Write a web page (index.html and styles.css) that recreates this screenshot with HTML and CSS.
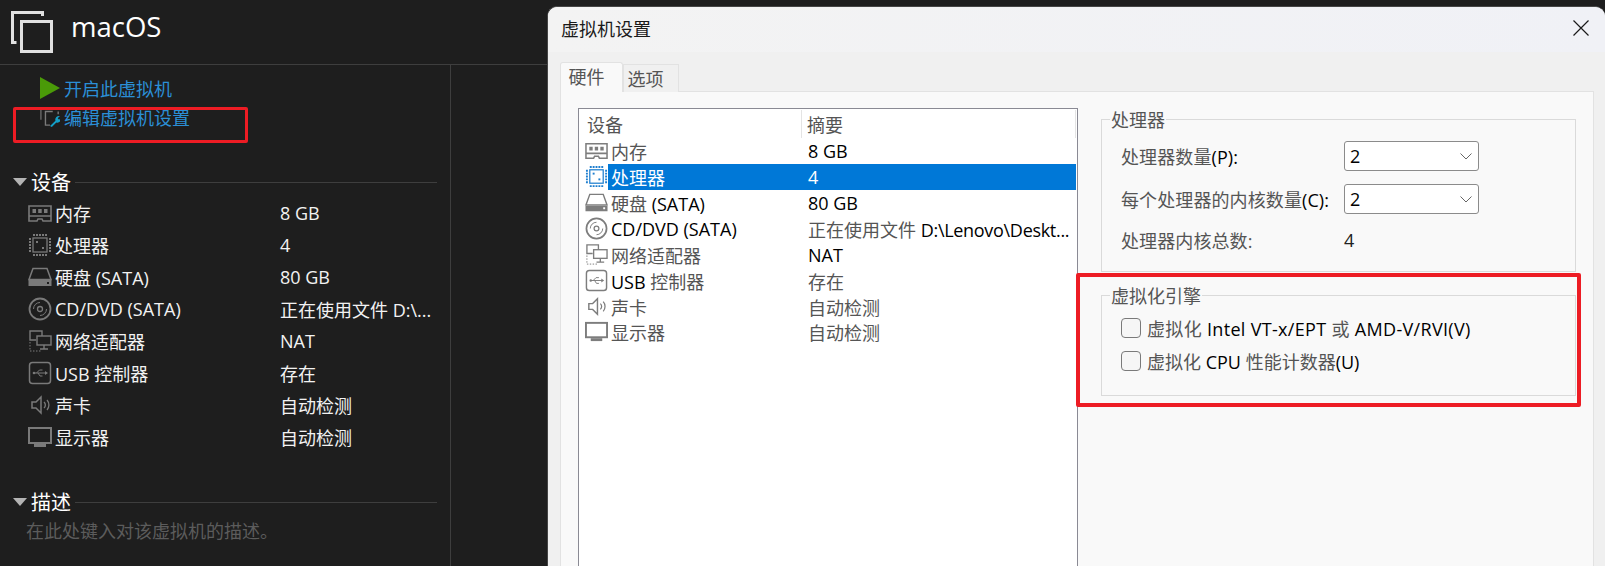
FILE: index.html
```html
<!DOCTYPE html>
<html lang="zh-CN">
<head>
<meta charset="utf-8">
<title>macOS - 虚拟机设置</title>
<link rel="stylesheet" href="styles.css">
</head>
<body>
<svg class="defs" aria-hidden="true">
  <symbol id="i-ram" viewBox="0 0 24 24"><path d="M1 5h22v10H1zM1 15v5h8l1-2h4l1 2h8v-5" fill="none" stroke="currentColor" stroke-width="1.6"/><path d="M4.500 8h3.500v4H4.500zM10.200 8h3.500v4h-3.500zM16 8h3.500v4H16z" fill="currentColor"/></symbol>
  <symbol id="i-cpu" viewBox="0 0 24 24"><rect x="5" y="5" width="14" height="14" fill="none" stroke="currentColor" stroke-width="1.300"/><path d="M5 2h14M5 22h14M2 5v14M22 5v14" fill="none" stroke="currentColor" stroke-width="2" stroke-dasharray="2 1"/><rect x="8" y="8" width="2" height="2" fill="currentColor"/><rect x="14" y="14" width="2" height="2" fill="currentColor"/></symbol>
  <symbol id="i-disk" viewBox="0 0 24 24"><path d="M5 3.500h14l4 11H1z" fill="none" stroke="currentColor" stroke-width="1.500"/><path d="M.5 15h23v6H.5z" fill="currentColor"/><rect x="19" y="17" width="2" height="2" fill="var(--hole)"/></symbol>
  <symbol id="i-cd" viewBox="0 0 24 24"><circle cx="12" cy="12" r="10.500" fill="none" stroke="currentColor" stroke-width="1.800"/><circle cx="12" cy="12" r="2.500" fill="none" stroke="currentColor" stroke-width="1.300"/><path d="M5.500 12A6.500 6.500 0 0 1 12 5.500M18.500 12A6.500 6.500 0 0 1 12 18.500" fill="none" stroke="currentColor"/></symbol>
  <symbol id="i-net" viewBox="0 0 24 24"><path d="M8 11H2V2h12v5" fill="none" stroke="currentColor" stroke-width="1.400"/><rect x="9" y="7" width="14" height="9" fill="none" stroke="currentColor" stroke-width="1.400"/><path d="M16 16v4M12 20h8" stroke="currentColor" stroke-width="1.400"/><path d="M2 13v9h12" fill="none" stroke="currentColor" stroke-dasharray="1.500 1.500"/></symbol>
  <symbol id="i-usb" viewBox="0 0 24 24"><rect x="1.500" y="1.500" width="21" height="21" rx="3" fill="none" stroke="currentColor" stroke-width="1.500"/><path d="M6 12h12M8.500 12l3-3h3M10 12l2 3h2.500" fill="none" stroke="currentColor"/><circle cx="6" cy="12" r="1.300" fill="currentColor"/><path d="M17 10l3 2-3 2z" fill="currentColor"/></symbol>
  <symbol id="i-snd" viewBox="0 0 24 24"><path d="M4 9h4l5-5v16l-5-5H4z" fill="none" stroke="currentColor" stroke-width="1.500"/><path d="M16 9a4 4 0 0 1 0 6M19 7a7.500 7.500 0 0 1 0 10" fill="none" stroke="currentColor" stroke-width="1.300"/></symbol>
  <symbol id="i-mon" viewBox="0 0 24 24"><rect x="1" y="3" width="22" height="15" fill="none" stroke="currentColor" stroke-width="2"/><path d="M6 20.500h12" stroke="currentColor" stroke-width="3"/></symbol>
</svg>

<div class="library">
  <header class="vm-head">
    <svg class="vm-icon" viewBox="0 0 44 44" aria-hidden="true"><path d="M31.500 5V1.500H1.500v30h4" fill="none" stroke="currentColor" stroke-width="3"/><rect x="10.500" y="10.500" width="30" height="30" fill="none" stroke="currentColor" stroke-width="3"/></svg>
    <h1 class="vm-name">macOS</h1>
  </header>
  <div class="vm-body">
    <div class="sidebar">
      <a class="action">
        <svg class="action-icon" viewBox="0 0 20 22" aria-hidden="true"><path d="M0 0l20 11L0 22z" fill="#4a9a08"/></svg>
        <span>开启此虚拟机</span>
      </a>
      <a class="action action-edit">
        <svg class="action-icon" viewBox="0 0 22 22" aria-hidden="true"><path d="M1 14V1h14" fill="none" stroke="#6a6a6a" stroke-width="1.500"/><path d="M14 5H6v15h5M20 5v3" fill="none" stroke="#7a7a7a" stroke-width="1.500"/><path d="M11 21l6-6a4 4 0 0 1 5-5l-2.500 2.500 1.500 1.500 2-2a4 4 0 0 1-5 5l-5 5z" fill="#14a0c8"/></svg>
        <span>编辑虚拟机设置</span>
      </a>

      <div class="sec-head"><i class="tri"></i><h2>设备</h2><i class="rule"></i></div>
      <ul class="dev-list">
        <li><svg class="ic"><use href="#i-ram"/></svg><span>内存</span><span>8 GB</span></li>
        <li><svg class="ic"><use href="#i-cpu"/></svg><span>处理器</span><span>4</span></li>
        <li><svg class="ic"><use href="#i-disk"/></svg><span>硬盘 (SATA)</span><span>80 GB</span></li>
        <li><svg class="ic"><use href="#i-cd"/></svg><span>CD/DVD (SATA)</span><span>正在使用文件 D:\...</span></li>
        <li><svg class="ic"><use href="#i-net"/></svg><span>网络适配器</span><span>NAT</span></li>
        <li><svg class="ic"><use href="#i-usb"/></svg><span>USB 控制器</span><span>存在</span></li>
        <li><svg class="ic"><use href="#i-snd"/></svg><span>声卡</span><span>自动检测</span></li>
        <li><svg class="ic"><use href="#i-mon"/></svg><span>显示器</span><span>自动检测</span></li>
      </ul>

      <div class="sec-head sec-desc"><i class="tri"></i><h2>描述</h2><i class="rule"></i></div>
      <p class="desc">在此处键入对该虚拟机的描述。</p>
    </div>
  </div>
</div>

<section class="dialog">
  <div class="titlebar">
    <span>虚拟机设置</span>
    <svg class="close" viewBox="0 0 16 16" aria-hidden="true"><path d="M.5.500l15 15M15.500.500l-15 15" stroke="#1a1a1a" stroke-width="1.200"/></svg>
  </div>
  <div class="dlg-body">
    <div class="tabs">
      <div class="tab tab-on">硬件</div>
      <div class="tab">选项</div>
    </div>
    <div class="panel">
      <div class="listbox">
        <div class="lb-head"><span>设备</span><span>摘要</span></div>
        <div class="lb-row"><svg class="ic"><use href="#i-ram"/></svg><div class="lb-cells"><span class="soft">内存</span><span>8 GB</span></div></div>
        <div class="lb-row lb-sel"><svg class="ic"><use href="#i-cpu"/></svg><div class="lb-cells"><span>处理器</span><span>4</span></div></div>
        <div class="lb-row"><svg class="ic"><use href="#i-disk"/></svg><div class="lb-cells"><span><span class="soft">硬盘</span> (SATA)</span><span>80 GB</span></div></div>
        <div class="lb-row"><svg class="ic"><use href="#i-cd"/></svg><div class="lb-cells"><span>CD/DVD (SATA)</span><span><span class="soft">正在使用文件</span> <span class="tight">D:\Lenovo\Deskt...</span></span></div></div>
        <div class="lb-row"><svg class="ic"><use href="#i-net"/></svg><div class="lb-cells"><span class="soft">网络适配器</span><span>NAT</span></div></div>
        <div class="lb-row"><svg class="ic"><use href="#i-usb"/></svg><div class="lb-cells"><span>USB <span class="soft">控制器</span></span><span class="soft">存在</span></div></div>
        <div class="lb-row"><svg class="ic"><use href="#i-snd"/></svg><div class="lb-cells"><span class="soft">声卡</span><span class="soft">自动检测</span></div></div>
        <div class="lb-row"><svg class="ic"><use href="#i-mon"/></svg><div class="lb-cells"><span class="soft">显示器</span><span class="soft">自动检测</span></div></div>
      </div>
      <div class="groups">
        <fieldset class="group group-cpu">
          <legend>处理器</legend>
          <div class="form-grid">
            <label><span class="soft">处理器数量</span>(P):</label>
            <div class="select"><span>2</span><svg class="chev" viewBox="0 0 12 7" aria-hidden="true"><path d="M.5.500L6 6l5.500-5.500" fill="none" stroke="#666"/></svg></div>
            <label><span class="soft">每个处理器的内核数量</span>(C):</label>
            <div class="select"><span>2</span><svg class="chev" viewBox="0 0 12 7" aria-hidden="true"><path d="M.5.500L6 6l5.500-5.500" fill="none" stroke="#666"/></svg></div>
            <label class="soft">处理器内核总数:</label>
            <div class="total">4</div>
          </div>
        </fieldset>
        <fieldset class="group group-engine">
          <legend>虚拟化引擎</legend>
          <div class="check-list">
            <div class="check-row check-wide"><i class="box"></i><span><span class="soft">虚拟化</span> Intel VT-x/EPT <span class="soft">或</span> AMD-V/RVI(V)</span></div>
            <div class="check-row"><i class="box"></i><span><span class="soft">虚拟化</span> CPU <span class="soft">性能计数器</span>(U)</span></div>
          </div>
        </fieldset>
      </div>
    </div>
  </div>
</section>

<div class="mark mark-action"></div>
<div class="mark mark-engine"></div>
</body>
</html>
```

FILE: styles.css
```css
* { box-sizing: border-box; }
html, body { margin: 0; padding: 0; }
body {
  width: 1605px;
  height: 566px;
  overflow: hidden;
  display: flex;
  position: relative;
  background: #1e1e1e;
  font-family: "Open Sans", "Noto Sans CJK SC", sans-serif;
  font-size: 18px;
}
.defs { display: none; }
.ic { display: block; width: 24px; height: 24px; flex: none; --hole: #1e1e1e; }

/* library */
.library { width: 547px; flex: none; color: #f2f2f2; }
.vm-head {
  height: 65px;
  border-bottom: 1px solid #3e3e3e;
  display: flex;
  align-items: flex-start;
}
.vm-icon { width: 44px; height: 44px; margin: 11px 0 0 11px; color: #e0e0e0; flex: none; }
.vm-name { margin: 5px 0 0 16px; font-size: 27.5px; font-weight: 400; line-height: 44px; color: #fff; }
.sidebar { width: 451px; height: 501px; border-right: 1px solid #3e3e3e; padding-top: 8px; }
.action {
  display: flex;
  align-items: center;
  height: 29px;
  padding-left: 40px;
  color: #2b8fd6;
}
.action-edit { margin-top: 1px; height: 28px; }
.action-icon { width: 20px; height: 22px; margin-right: 4px; flex: none; }
.sec-head {
  display: flex;
  align-items: center;
  height: 28px;
  margin-top: 38px;
  padding: 0 13px;
}
.sec-desc { margin-top: 36px; }
.tri {
  width: 0; height: 0;
  border-style: solid;
  border-width: 8px 7.500px 0;
  border-color: #b4b4b4 transparent transparent;
  flex: none;
  margin-bottom: 2px;
}
.sec-head h2 { margin: 0 4px; font-size: 20px; font-weight: 400; line-height: 28px; color: #fff; }
.rule { flex: 1; height: 1px; background: #3e3e3e; margin-bottom: 2px; }
.dev-list { list-style: none; margin: 0; padding: 0 0 0 28px; color: #7a7a7a; }
.dev-list li { display: grid; grid-template-columns: 27px 225px 1fr; align-items: center; height: 32px; }
.dev-list span { color: #f2f2f2; white-space: nowrap; }
.desc { margin: 0; height: 28px; line-height: 28px; padding-left: 26px; color: #5c5c5c; }

/* dialog */
.dialog {
  flex: 1;
  margin-top: 6px;
  border: 1px solid #454545;
  border-bottom: 0;
  border-right: 0;
  border-radius: 10px 10px 0 0;
  background: #f0f0f0;
  overflow: hidden;
  color: #000;
  display: flex;
  flex-direction: column;
}
.soft { color: #555; }
.tight { letter-spacing: -.3px; }
.titlebar {
  height: 45px;
  flex: none;
  display: flex;
  align-items: center;
  justify-content: space-between;
  padding: 0 16px 3px 13px;
  background: linear-gradient(90deg, #f3f3f3, #f0f1f6);
  color: #1a1a1a;
}
.close { width: 16px; height: 16px; }
.dlg-body { flex: 1; padding: 0 11px 0 12px; display: flex; flex-direction: column; }
.tabs { display: flex; align-items: flex-end; height: 40px; flex: none; margin-bottom: -1px; position: relative; z-index: 1; }
.tab {
  width: 56px;
  height: 28px;
  line-height: 28px;
  padding-right: 11px;
  text-align: center;
  border: 1px solid #e2e2e2;
  border-bottom: 0;
  background: #f0f0f0;
  color: #555;
}
.tab-on {
  width: 63px;
  height: 30px;
  background: #f9f9f9;
  padding-right: 10px;
  border-radius: 3px 3px 0 0;
}
.panel {
  flex: 1;
  display: flex;
  gap: 23px;
  background: #f9f9f9;
  border: 1px solid #e2e2e2;
  border-bottom: 0;
  padding: 16px 17px 0;
}
.listbox {
  width: 500px;
  flex: none;
  background: #fff;
  border: 1px solid #8a8a94;
  border-bottom: 0;
}
.lb-head { display: flex; height: 29px; padding-top: 1px; line-height: 31px; color: #555; }
.lb-head span:first-child { width: 223px; padding-left: 8px; border-right: 1px solid #e4e4e4; }
.lb-head span:last-child { flex: 1; padding-left: 5px; border-right: 1px solid #e4e4e4; margin-right: 1px; }
.lb-row { display: flex; align-items: center; height: 25.86px; padding-left: 6px; color: #7d7d7d; }
.lb-row .ic { width: 23px; height: 23px; --hole: #fff; }
.lb-cells { flex: 1; display: flex; align-items: center; height: 100%; padding: 1px 1px 0 3px; color: #000; white-space: nowrap; margin-right: 1px; }
.lb-cells > span:first-child { width: 197px; flex: none; }
.lb-sel { color: #1f7fcf; }
.lb-sel .lb-cells { background: #0078d7; color: #fff; }
.groups { flex: 1; display: flex; flex-direction: column; gap: 12px; width: 477px; }
.group { margin: 0; padding: 0; border: 1px solid #dadada; min-width: 0; }
.group legend { margin-left: 8px; padding: 0 1px; line-height: 25px; height: 22px; color: #555; }
.group-cpu { padding-top: 11px; padding-bottom: 18px; }
.form-grid { display: grid; grid-template-columns: 223px 135px; row-gap: 13px; align-items: center; padding-left: 19px; letter-spacing: .1px; }
.form-grid label { white-space: nowrap; }
.select {
  height: 30px;
  background: #fff;
  border: 1px solid #8b8b8b;
  border-radius: 3px;
  padding: 0 6px 0 5px;
  display: flex;
  align-items: center;
  justify-content: space-between;
}
.chev { width: 12px; height: 7px; }
.total { height: 24px; line-height: 24px; color: #222; }
.group-engine { padding: 10px 0 22px; }
.check-list { display: flex; flex-direction: column; gap: 9px; padding-left: 19px; }
.check-row { display: flex; align-items: center; height: 24px; gap: 6px; white-space: nowrap; }
.check-wide { letter-spacing: .32px; }
.box { width: 20px; height: 20px; flex: none; border: 1px solid #7a7a7a; border-radius: 4px; background: #f6f6f6; }

/* annotations lying over the screenshot */
.mark { position: absolute; border: 3px solid #ed1c24; border-radius: 2px; }
.mark-action { left: 13px; top: 107px; width: 235px; height: 36px; }
.mark-engine { left: 1076px; top: 273px; width: 505px; height: 134px; border-width: 4px; }
```
